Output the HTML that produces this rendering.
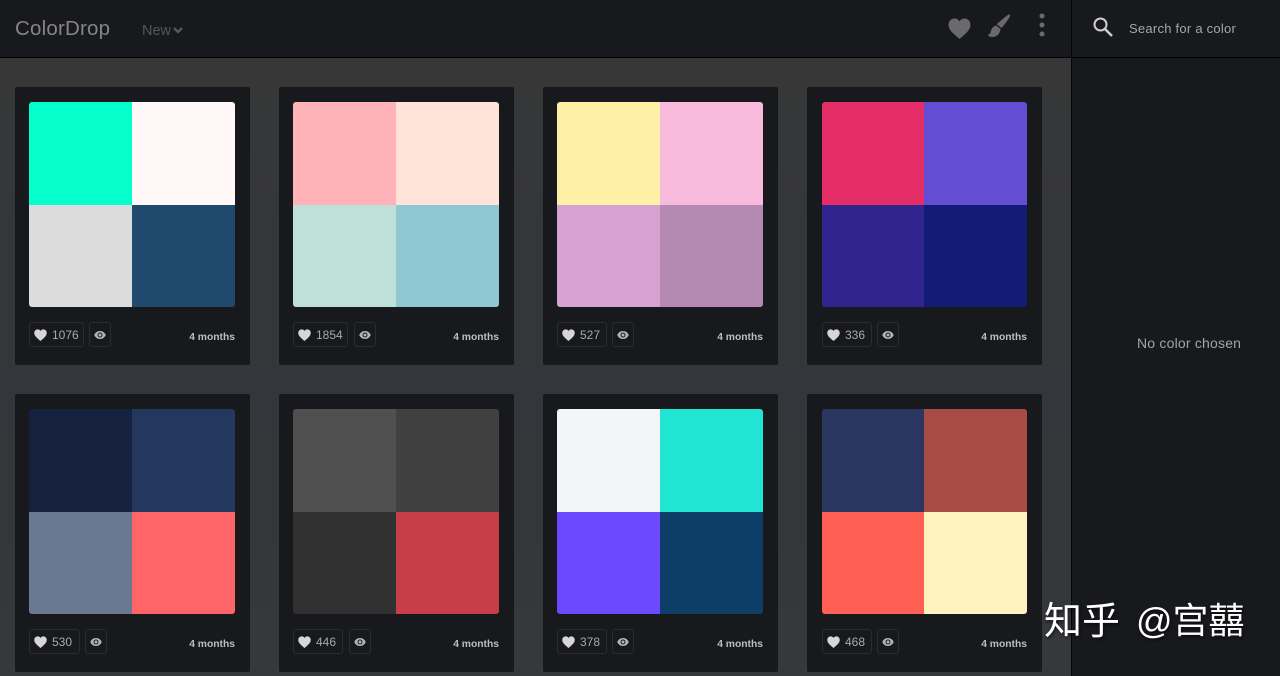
<!DOCTYPE html>
<html lang="zh"><head><meta charset="utf-8"><title>ColorDrop</title>
<style>
html,body{margin:0;padding:0;width:1280px;height:676px;overflow:hidden;background:#18191d}
body{position:relative;font-family:"Liberation Sans","Noto Sans CJK SC",sans-serif}
.a{position:absolute}
.main{left:0;top:58px;width:1071px;height:618px;background:linear-gradient(#373737,#33363a 55%,#36383b)}
.card{position:absolute;width:235px;height:278px;background:#18191d;border-radius:2px}
.sw{position:absolute;left:14px;top:15px;width:206px;height:205px;border-radius:3px;overflow:hidden}
.sw i{position:absolute;display:block;width:103px;height:103px}
.sw i:nth-child(1){left:0;top:0}.sw i:nth-child(2){left:103px;top:0}
.sw i:nth-child(3){left:0;top:103px;height:102px}.sw i:nth-child(4){left:103px;top:103px;height:102px}
.c4 .sw{left:15px;width:205px}.c4 .sw i:nth-child(1),.c4 .sw i:nth-child(3){width:102px}.c4 .sw i:nth-child(2),.c4 .sw i:nth-child(4){left:102px;width:103px}
.btn{position:absolute;top:235px;height:23px;border:1px solid #2b2c30;border-radius:3px;box-sizing:content-box}
.n{position:absolute;left:22px;top:5px;font-size:12px;line-height:14px;color:#a9a9a9;letter-spacing:0}
.btn svg{position:absolute}
.h{left:4px;top:6px}.e{left:4px;top:7px}
.t{position:absolute;right:15px;top:244px;font-size:10.300px;line-height:13px;font-weight:bold;color:#bdbdbd}
</style></head><body>
<svg width="0" height="0" style="position:absolute"><defs>
<symbol id="heart" viewBox="0 0 24 22"><path d="M12 22C5 16 .5 12.500 .5 7 .5 3 3.500 .5 6.800 .5 9 .5 11 1.500 12 3.500 13 1.500 15 .5 17.200 .5 20.500 .5 23.500 3 23.500 7 23.500 12.500 19 16 12 22z"/></symbol>
<symbol id="eye" viewBox="0 0 24 18"><path d="M12 1C6.500 1 2.500 4.500 .5 9c2 4.500 6 8 11.500 8s9.500-3.500 11.500-8C21.500 4.500 17.500 1 12 1zm0 13a5 5 0 1 1 0-10 5 5 0 0 1 0 10zm0-8a3 3 0 1 0 0 6 3 3 0 0 0 0-6z"/></symbol>
</defs></svg>
<div class="a main"></div>
<div class="a" style="left:0;top:57px;width:1280px;height:1px;background:#020203"></div>
<div class="a" style="left:1071px;top:0;width:1px;height:676px;background:#050506"></div>
<div class="a" style="left:15px;top:16px;font-size:20.500px;line-height:26px;color:#858585;letter-spacing:.2px">ColorDrop</div>
<div class="a" style="left:142px;top:22px;font-size:14.500px;line-height:18px;color:#55565a">New</div>
<svg class="a" style="left:172px;top:26px" width="12" height="9" viewBox="0 0 12 9"><path d="M2 2l4 4 4-4" fill="none" stroke="#55565a" stroke-width="2.400"/></svg>
<svg class="a" style="left:948px;top:18px;fill:#6a6a6a" width="23" height="21"><use href="#heart"/></svg>
<svg class="a" style="left:987px;top:14px" width="24" height="24" viewBox="0 0 24 24"><path d="M22.800.7c.6.6.2 1.800-.6 3-1.800 3-5 7.200-7.700 10.300l-4.600-3.800C13 7.300 17.300 3.500 20.300 1.400c1.100-.8 2-1.200 2.500-.7z" fill="#6a6a6a"/><path d="M9.200 11.500l4.300 3.500c-.4 4.500-3.600 8-8 8-2.300 0-4-.8-4.700-2.300 1.800-.3 2.600-1.100 2.900-2.700.5-3.200 2.700-6 5.500-6.500z" fill="#6a6a6a"/></svg>
<svg class="a" style="left:1037px;top:13px" width="10" height="24" viewBox="0 0 10 24"><g fill="#6a6a6a"><circle cx="5" cy="3" r="2.500"/><circle cx="5" cy="12" r="2.500"/><circle cx="5" cy="21" r="2.500"/></g></svg>
<svg class="a" style="left:1092px;top:16px" width="22" height="22" viewBox="0 0 22 22"><circle cx="8.500" cy="8.500" r="6" fill="none" stroke="#cfcfcf" stroke-width="2"/><path d="M13 13l7 7" stroke="#cfcfcf" stroke-width="2.400" fill="none"/></svg>
<div class="a" style="left:1129px;top:21px;font-size:13px;line-height:16px;color:#a6a6a8;letter-spacing:.25px">Search for a color</div>
<div class="a" style="left:1137px;top:335px;font-size:14px;line-height:17px;color:#a4a4a6;letter-spacing:.2px">No color chosen</div>

<div class="card" style="left:15px;top:87px"><div class="sw"><i style="background:#05ffcc"></i><i style="background:#fff7f8"></i><i style="background:#dcdcdc"></i><i style="background:#1f4a6e"></i></div>
<div class="btn" style="left:14px;width:53px"><svg class="h" fill="#d6d6d6" width="13" height="12"><use href="#heart"/></svg><span class="n">1076</span></div>
<div class="btn" style="left:74px;width:20px"><svg class="e" fill="#b5b5b5" width="12" height="10"><use href="#eye"/></svg></div><div class="t">4 months</div></div>

<div class="card" style="left:279px;top:87px"><div class="sw"><i style="background:#ffb3b8"></i><i style="background:#ffe2d8"></i><i style="background:#bde0d8"></i><i style="background:#8cc7d2"></i></div>
<div class="btn" style="left:14px;width:53px"><svg class="h" fill="#d6d6d6" width="13" height="12"><use href="#heart"/></svg><span class="n">1854</span></div>
<div class="btn" style="left:75px;width:20px"><svg class="e" fill="#b5b5b5" width="12" height="10"><use href="#eye"/></svg></div><div class="t">4 months</div></div>

<div class="card" style="left:543px;top:87px"><div class="sw"><i style="background:#fff0a8"></i><i style="background:#f9bbdd"></i><i style="background:#d5a2d2"></i><i style="background:#b58ab2"></i></div>
<div class="btn" style="left:14px;width:48px"><svg class="h" fill="#d6d6d6" width="13" height="12"><use href="#heart"/></svg><span class="n">527</span></div>
<div class="btn" style="left:69px;width:20px"><svg class="e" fill="#b5b5b5" width="12" height="10"><use href="#eye"/></svg></div><div class="t">4 months</div></div>

<div class="card c4" style="left:807px;top:87px"><div class="sw"><i style="background:#e52d67"></i><i style="background:#634dd3"></i><i style="background:#32248e"></i><i style="background:#121c76"></i></div>
<div class="btn" style="left:15px;width:48px"><svg class="h" fill="#d6d6d6" width="13" height="12"><use href="#heart"/></svg><span class="n">336</span></div>
<div class="btn" style="left:70px;width:20px"><svg class="e" fill="#b5b5b5" width="12" height="10"><use href="#eye"/></svg></div><div class="t">4 months</div></div>

<div class="card" style="left:15px;top:394px"><div class="sw"><i style="background:#15213f"></i><i style="background:#24375d"></i><i style="background:#6b7892"></i><i style="background:#ff6468"></i></div>
<div class="btn" style="left:14px;width:49px"><svg class="h" fill="#d6d6d6" width="13" height="12"><use href="#heart"/></svg><span class="n">530</span></div>
<div class="btn" style="left:70px;width:20px"><svg class="e" fill="#b5b5b5" width="12" height="10"><use href="#eye"/></svg></div><div class="t">4 months</div></div>

<div class="card" style="left:279px;top:394px"><div class="sw"><i style="background:#505050"></i><i style="background:#404040"></i><i style="background:#313131"></i><i style="background:#c73e48"></i></div>
<div class="btn" style="left:14px;width:48px"><svg class="h" fill="#d6d6d6" width="13" height="12"><use href="#heart"/></svg><span class="n">446</span></div>
<div class="btn" style="left:70px;width:20px"><svg class="e" fill="#b5b5b5" width="12" height="10"><use href="#eye"/></svg></div><div class="t">4 months</div></div>

<div class="card" style="left:543px;top:394px"><div class="sw"><i style="background:#f3f5f8"></i><i style="background:#1fe5d2"></i><i style="background:#6c48ff"></i><i style="background:#0c3e68"></i></div>
<div class="btn" style="left:14px;width:48px"><svg class="h" fill="#d6d6d6" width="13" height="12"><use href="#heart"/></svg><span class="n">378</span></div>
<div class="btn" style="left:69px;width:20px"><svg class="e" fill="#b5b5b5" width="12" height="10"><use href="#eye"/></svg></div><div class="t">4 months</div></div>

<div class="card c4" style="left:807px;top:394px"><div class="sw"><i style="background:#2b3661"></i><i style="background:#a84b45"></i><i style="background:#ff6053"></i><i style="background:#fff2bf"></i></div>
<div class="btn" style="left:15px;width:48px"><svg class="h" fill="#d6d6d6" width="13" height="12"><use href="#heart"/></svg><span class="n">468</span></div>
<div class="btn" style="left:70px;width:20px"><svg class="e" fill="#b5b5b5" width="12" height="10"><use href="#eye"/></svg></div><div class="t">4 months</div></div>

<div class="a" style="left:1044px;top:601px;font-size:38px;line-height:42px;color:#fff;white-space:nowrap;letter-spacing:0;text-shadow:1px 2px 3px rgba(0,0,0,.6)">知乎</div>
<div class="a" style="left:1136px;top:600px;font-size:36px;line-height:42px;color:#fff;white-space:nowrap;text-shadow:1px 2px 3px rgba(0,0,0,.6)">@宫囍</div>
</body></html>
